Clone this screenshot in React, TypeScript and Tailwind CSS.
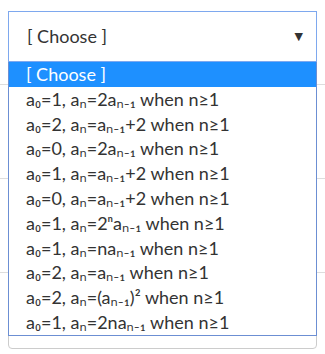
import React from 'react';

const options = [
  '[ Choose ]',
  'a₀=1, aₙ=2aₙ₋₁ when n≥1',
  'a₀=2, aₙ=aₙ₋₁+2 when n≥1',
  'a₀=0, aₙ=2aₙ₋₁ when n≥1',
  'a₀=1, aₙ=aₙ₋₁+2 when n≥1',
  'a₀=0, aₙ=aₙ₋₁+2 when n≥1',
  'a₀=1, aₙ=2ⁿaₙ₋₁ when n≥1',
  'a₀=1, aₙ=naₙ₋₁ when n≥1',
  'a₀=2, aₙ=aₙ₋₁ when n≥1',
  'a₀=2, aₙ=(aₙ₋₁)² when n≥1',
  'a₀=1, aₙ=2naₙ₋₁ when n≥1',
];

export default function App() {
  const selected = 0;

  return (
    <div
      className="w-[325px] h-[354px] bg-white overflow-hidden text-[#333]"
      style={{ fontFamily: 'Lato, "Noto Sans", "DejaVu Sans", sans-serif' }}
    >
      {/* select row */}
      <div className="h-[84px] px-2 pt-[11px]">
        <div className="relative">
          <div className="h-[51px] border border-[#7ea8ee] bg-white flex items-center justify-between pl-[18px] pr-[11px]">
            <span className="text-[18px] leading-none -mt-px">[ Choose ]</span>
            <span className="text-[11px] leading-none text-[#333] -mt-[3px] mr-[2px]">▼</span>
          </div>

          {/* open dropdown list */}
          <ul className="absolute left-0 right-0 top-full z-10 bg-white border border-t-0 border-[#6c8fd3]">
            {options.map((opt, i) => (
              <li
                key={i}
                className={`h-[24.8px] leading-[24.8px] pl-[17px] text-[18px] whitespace-nowrap ${
                  i === selected ? 'bg-[#1e90ff] text-white' : 'text-[#333]'
                }`}
              >
                {opt}
              </li>
            ))}
          </ul>
        </div>
      </div>

      {/* rows behind the list */}
      <div className="h-[94px] border-t border-[#dddddd]" />
      <div className="h-[94px] border-t border-[#dddddd]" />
      <div className="border-t border-[#dddddd] px-2">
        <div className="h-[76px] border border-[#cccccc] rounded-[4px]" />
      </div>
    </div>
  );
}
